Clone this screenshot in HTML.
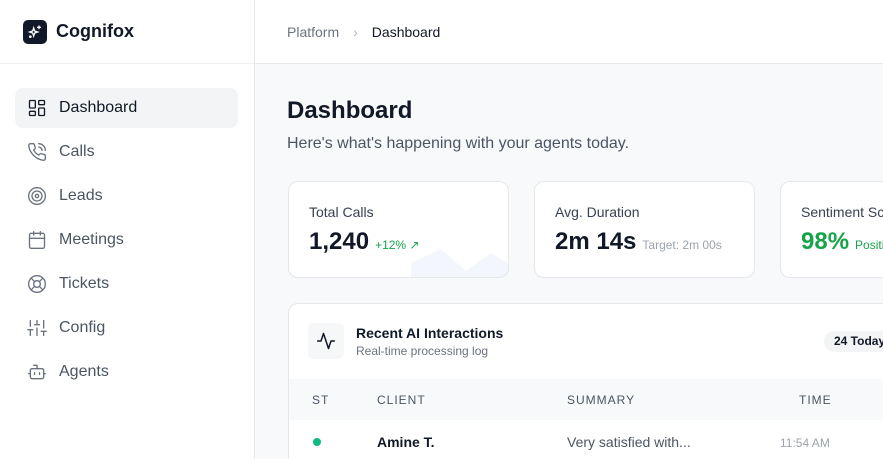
<!DOCTYPE html>
<html style="width:883px;height:459px;overflow:hidden"><head><meta charset="utf-8"><style>
*{box-sizing:border-box;margin:0;padding:0}
body{width:883px;height:459px;overflow:hidden;font-family:"Liberation Sans",sans-serif;background:#f8f9fb;position:relative;color:#111827}
.side{position:absolute;left:0;top:0;width:255px;height:459px;background:#fff;border-right:1px solid #e5e7eb}
.logo{height:64px;border-bottom:1px solid #eceef1;display:flex;align-items:center;padding-left:23px}
.lb{width:24px;height:24px;border-radius:5px;background:#111827;display:flex;align-items:center;justify-content:center;margin-right:9px}
.logo span{font-size:18px;font-weight:bold;color:#111827}
.nav{position:absolute;left:15px;top:88px;width:223px}
.item{height:40px;display:flex;align-items:center;padding-left:12px;font-size:16px;color:#4b5563;margin-bottom:4px;border-radius:8px}
.item.a{background:#f3f4f6;color:#111827}
.item svg{width:20px;height:20px;margin-right:12px;fill:none;stroke:#6b7280;stroke-width:1.6;stroke-linecap:round;stroke-linejoin:round}
.item.a svg{stroke:#111827}
.top{position:absolute;left:255px;top:0;right:0;height:64px;border-bottom:1px solid #e5e7eb;background:#fff;display:flex;align-items:center;padding-left:32px;font-size:14px;color:#6b7280}
.top b{color:#111827;font-weight:normal;margin-left:14px}
.top i{font-style:normal;margin-left:14px;color:#b0b5bd}
h1{position:absolute;left:287px;top:97px;font-size:24px;font-weight:bold;color:#111827}
.sub{position:absolute;left:287px;top:135px;font-size:16px;color:#4b5563}
.card{position:absolute;top:181px;width:221px;height:97px;background:#fff;border:1px solid #e5e7eb;border-radius:10px;padding:22px 20px;overflow:hidden}
.card .l{font-size:14px;color:#374151;white-space:nowrap}
.card .v{margin-top:8px;font-size:24px;font-weight:bold;white-space:nowrap}
.card .v small{font-size:12px;font-weight:normal;margin-left:6px}
.tbl{position:absolute;left:288px;top:303px;width:620px;height:156px;background:#fff;border:1px solid #e5e7eb;border-bottom:none;border-radius:10px 10px 0 0;overflow:hidden}
.ic{position:absolute;left:19px;top:19px;width:36px;height:36px;background:#f6f7f9;border-radius:6px;display:flex;align-items:center;justify-content:center}
.tt{position:absolute;left:67px;top:21px;font-size:14px;font-weight:bold}
.ts{position:absolute;left:67px;top:40px;font-size:12px;color:#6b7280}
.badge{position:absolute;left:535px;top:27px;width:100px;height:21px;background:#f3f4f6;border-radius:11px;font-size:12px;font-weight:bold;padding:3px 10px}
.th{position:absolute;left:0;top:75px;width:100%;height:41px;background:#f8f9fb;font-size:12px;color:#4b5563;letter-spacing:1px}
.th span,.tr span{position:absolute;top:14px}
.tr{position:absolute;left:0;top:116px;width:100%;height:45px;font-size:14px}
</style></head><body>
<div class="side">
 <div class="logo"><div class="lb"><svg width="16" height="16" viewBox="0 0 24 24" fill="none" stroke="#fff" stroke-width="2" stroke-linecap="round"><path d="M10 6l1.5 4.5L16 12l-4.5 1.5L10 18l-1.5-4.5L4 12l4.5-1.5z"/><path d="M18 3v4M16 5h4"/><circle cx="5" cy="19" r="1"/></svg></div><span>Cognifox</span></div>
 <div class="nav">
  <div class="item a"><svg viewBox="0 0 24 24"><rect x="3" y="3" width="7" height="9" rx="1"/><rect x="14" y="3" width="7" height="5" rx="1"/><rect x="14" y="12" width="7" height="9" rx="1"/><rect x="3" y="16" width="7" height="5" rx="1"/></svg>Dashboard</div>
  <div class="item"><svg viewBox="0 0 24 24"><path d="M22 16.9v3a2 2 0 0 1-2.2 2 19.8 19.8 0 0 1-8.6-3.1 19.5 19.5 0 0 1-6-6A19.8 19.8 0 0 1 2.1 4.2 2 2 0 0 1 4.1 2h3a2 2 0 0 1 2 1.7c.1 1 .4 1.9.7 2.8a2 2 0 0 1-.5 2.1L8 9.8a16 16 0 0 0 6 6l1.3-1.3a2 2 0 0 1 2.1-.4c.9.3 1.8.6 2.8.7a2 2 0 0 1 1.7 2z"/><path d="M14 2a8 8 0 0 1 8 8M14 6a4 4 0 0 1 4 4"/></svg>Calls</div>
  <div class="item"><svg viewBox="0 0 24 24"><circle cx="12" cy="12" r="10"/><circle cx="12" cy="12" r="6"/><circle cx="12" cy="12" r="2"/></svg>Leads</div>
  <div class="item"><svg viewBox="0 0 24 24"><rect x="3" y="4" width="18" height="18" rx="2"/><path d="M16 2v4M8 2v4M3 10h18"/></svg>Meetings</div>
  <div class="item"><svg viewBox="0 0 24 24"><circle cx="12" cy="12" r="10"/><circle cx="12" cy="12" r="4"/><path d="M4.9 4.9l4.3 4.3M14.8 14.8l4.3 4.3M14.8 9.2l4.3-4.3M4.9 19.1l4.3-4.3"/></svg>Tickets</div>
  <div class="item"><svg viewBox="0 0 24 24"><path d="M4 21v-7M4 10V3M12 21v-9M12 8V3M20 21v-5M20 12V3M1 14h6M9 8h6M17 16h6"/></svg>Config</div>
  <div class="item"><svg viewBox="0 0 24 24"><path d="M12 8V4H8"/><rect x="4" y="8" width="16" height="12" rx="2"/><path d="M2 14h2M20 14h2M15 13v2M9 13v2"/></svg>Agents</div>
 </div>
</div>
<div class="top">Platform<i>›</i><b>Dashboard</b></div>
<h1>Dashboard</h1>
<div class="sub">Here's what's happening with your agents today.</div>
<div class="card" style="left:288px"><div class="l">Total Calls</div><div class="v">1,240<small style="color:#16a34a">+12% ↗</small></div><svg style="position:absolute;left:122px;bottom:0" width="100" height="34"><path d="M0 20L30 6 55 28 80 10 100 22V34H0z" fill="#f3f6fc"/></svg></div>
<div class="card" style="left:534px"><div class="l">Avg. Duration</div><div class="v">2m 14s<small style="color:#9ca3af">Target: 2m 00s</small></div></div>
<div class="card" style="left:780px"><div class="l">Sentiment Score</div><div class="v" style="color:#16a34a">98%<small>Positive</small></div></div>
<div class="tbl">
 <div class="ic"><svg width="20" height="20" viewBox="0 0 24 24" fill="none" stroke="#111827" stroke-width="1.8" stroke-linecap="round" stroke-linejoin="round"><path d="M22 12h-4l-3 9L9 3l-3 9H2"/></svg></div>
 <div class="tt">Recent AI Interactions</div><div class="ts">Real-time processing log</div>
 <div class="badge">24 Today</div>
 <div class="th"><span style="left:23px">ST</span><span style="left:88px">CLIENT</span><span style="left:278px">SUMMARY</span><span style="left:510px">TIME</span></div>
 <div class="tr"><span style="left:24px;top:18px;width:8px;height:8px;border-radius:50%;background:#10b981"></span><span style="left:88px;font-weight:bold">Amine T.</span><span style="left:278px;color:#4b5563">Very satisfied with...</span><span style="left:491px;font-size:12px;color:#9ca3af;top:16px">11:54 AM</span></div>
</div>
</body></html>
